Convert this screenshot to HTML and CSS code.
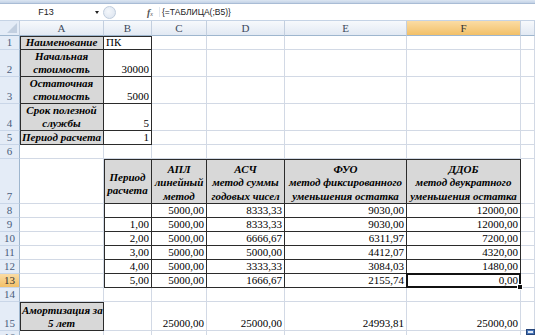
FILE: index.html
```html
<!DOCTYPE html>
<html lang="ru">
<head>
  <meta charset="UTF-8" />
  <title>Амортизация</title>
  <link rel="stylesheet" href="styles.css">
</head>
<body>
  <div class="app">
    <div class="ribbon-edge"></div>

    <div class="formula-bar">
      <div class="name-box">F13</div>
      <span class="drop"></span>
      <span class="knob"></span>
      <span class="fx"><i>f</i><small>x</small></span>
      <span class="formula">{=ТАБЛИЦА(;B5)}</span>
    </div>

    <table class="sheet">
      <colgroup>
        <col class="c-rh"><col class="c-a"><col class="c-b"><col class="c-c"><col class="c-d"><col class="c-e"><col class="c-f"><col class="c-g">
      </colgroup>
      <tr class="hdr">
        <th class="corner"></th><th>A</th><th>B</th><th>C</th><th>D</th><th>E</th><th class="sel">F</th><th></th>
      </tr>
      <tr class="h14">
        <th>1</th><td class="lbl bx bl bt">Наименование</td><td class="txt bx bt">ПК</td><td></td><td></td><td></td><td></td><td></td>
      </tr>
      <tr class="h27">
        <th>2</th><td class="lbl bx bl">Начальная<br>стоимость</td><td class="bx">30000</td><td></td><td></td><td></td><td></td><td></td>
      </tr>
      <tr class="h27">
        <th>3</th><td class="lbl bx bl">Остаточная<br>стоимость</td><td class="bx">5000</td><td></td><td></td><td></td><td></td><td></td>
      </tr>
      <tr class="h27">
        <th>4</th><td class="lbl bx bl">Срок полезной<br>службы</td><td class="bx">5</td><td></td><td></td><td></td><td></td><td></td>
      </tr>
      <tr class="h14">
        <th>5</th><td class="lbl bx bl">Период расчета</td><td class="bx">1</td><td></td><td></td><td></td><td></td><td></td>
      </tr>
      <tr class="h14">
        <th>6</th><td></td><td></td><td></td><td></td><td></td><td></td><td></td>
      </tr>
      <tr class="h45">
        <th>7</th><td></td>
        <td class="lbl head mid bx bl bt">Период<br>расчета</td>
        <td class="lbl head bx bt">АПЛ<br>линейный<br>метод</td>
        <td class="lbl head bx bt">АСЧ<br>метод суммы<br>годовых чисел</td>
        <td class="lbl head bx bt">ФУО<br>метод фиксированного<br>уменьшения остатка</td>
        <td class="lbl head bx bt">ДДОБ<br>метод двукратного<br>уменьшения остатка</td>
        <td></td>
      </tr>
      <tr class="h13">
        <th>8</th><td></td><td class="bx bl"></td><td class="bx">5000,00</td><td class="bx">8333,33</td><td class="bx">9030,00</td><td class="bx">12000,00</td><td></td>
      </tr>
      <tr class="h14">
        <th>9</th><td></td><td class="bx bl">1,00</td><td class="bx">5000,00</td><td class="bx">8333,33</td><td class="bx">9030,00</td><td class="bx">12000,00</td><td></td>
      </tr>
      <tr class="h13">
        <th>10</th><td></td><td class="bx bl">2,00</td><td class="bx">5000,00</td><td class="bx">6666,67</td><td class="bx">6311,97</td><td class="bx">7200,00</td><td></td>
      </tr>
      <tr class="h14">
        <th>11</th><td></td><td class="bx bl">3,00</td><td class="bx">5000,00</td><td class="bx">5000,00</td><td class="bx">4412,07</td><td class="bx">4320,00</td><td></td>
      </tr>
      <tr class="h13">
        <th>12</th><td></td><td class="bx bl">4,00</td><td class="bx">5000,00</td><td class="bx">3333,33</td><td class="bx">3084,03</td><td class="bx">1480,00</td><td></td>
      </tr>
      <tr class="h14">
        <th class="sel">13</th><td></td><td class="bx bl">5,00</td><td class="bx">5000,00</td><td class="bx">1666,67</td><td class="bx">2155,74</td><td class="bx cur">0,00</td><td></td>
      </tr>
      <tr class="h13">
        <th>14</th><td></td><td></td><td></td><td></td><td></td><td></td><td></td>
      </tr>
      <tr class="h29">
        <th>15</th><td class="lbl bx bl bt">Амортизация за<br>5 лет</td><td></td><td>25000,00</td><td>25000,00</td><td>24993,81</td><td>25000,00</td><td></td>
      </tr>
      <tr class="h14">
        <th>16</th><td></td><td></td><td></td><td></td><td></td><td></td><td></td>
      </tr>
    </table>

    <svg class="fill-opt" width="9" height="6" viewBox="0 0 9 6">
      <rect x="0.5" y="0.5" width="8" height="5" fill="#4a76b8" stroke="#27467a"/>
      <rect x="2" y="2" width="5" height="2" fill="#dfe9f7"/>
    </svg>
  </div>
</body>
</html>
```

FILE: styles.css
```css
html, body {
  margin: 0;
  padding: 0;
  background: #fff;
}

.app {
  position: relative;
  width: 535px;
  height: 335px;
  overflow: hidden;
  font-family: "Liberation Serif", serif;
}

.ribbon-edge {
  height: 3px;
  background: linear-gradient(#dce6f2, #c3d2e6);
  border-bottom: 1px solid #a9bcd5;
}

.formula-bar {
  display: flex;
  align-items: center;
  height: 16px;
  background: #fff;
  border-bottom: 1px solid #c5d3e5;
  font-family: "Liberation Sans", sans-serif;
  color: #222;
}

.name-box {
  width: 92px;
  text-align: center;
  font-size: 9px;
}

.drop {
  width: 0;
  height: 0;
  margin-left: 3px;
  border-top: 3px solid #222;
  border-left: 2.5px solid transparent;
  border-right: 2.5px solid transparent;
}

.knob {
  width: 13px;
  height: 13px;
  margin-left: 4px;
  border-radius: 50%;
  border: 1px solid #c0cddd;
  background: radial-gradient(circle at 40% 40%, #f4f7fb, #d9e2ee);
  box-sizing: border-box;
}

.fx {
  margin-left: 31px;
  font-family: "Liberation Serif", serif;
  font-size: 10px;
  color: #555;
}

.fx i {
  font-weight: bold;
}

.fx small {
  font-size: 6px;
  font-style: italic;
}

.formula {
  margin-left: 6px;
  padding-left: 2px;
  font-size: 8.5px;
  border-left: 1px solid #e2e8f0;
}

.sheet {
  table-layout: fixed;
  width: 535px;
  border-collapse: separate;
  border-spacing: 0;
  font-size: 11px;
  line-height: 13px;
}

.c-rh { width: 20px; }
.c-a { width: 84px; }
.c-b { width: 48px; }
.c-c { width: 55px; }
.c-d { width: 78px; }
.c-e { width: 122px; }
.c-f { width: 114px; }
.c-g { width: 14px; }

.sheet th,
.sheet td {
  box-sizing: border-box;
  padding: 0 2px;
  white-space: nowrap;
}

.sheet td {
  border-right: 1px solid #d2d9e5;
  border-bottom: 1px solid #d2d9e5;
  vertical-align: bottom;
  text-align: right;
  color: #000;
}

.sheet th {
  font-weight: normal;
  color: #34496a;
}

.hdr th {
  height: 15px;
  padding: 0;
  vertical-align: middle;
  text-align: center;
  background: linear-gradient(#f7f9fc, #e2e9f3);
  border-right: 1px solid #c3cfdf;
  border-bottom: 1px solid #9eb6ce;
  color: #3d4a5c;
}

tr:not(.hdr) th {
  padding: 0;
  vertical-align: bottom;
  text-align: center;
  background: #e4ecf7;
  border-right: 1px solid #9eb6ce;
  border-bottom: 1px solid #c9d6e8;
  color: #4a5d7c;
}

.sheet th.sel {
  background: linear-gradient(#fbdca4, #f2c068);
  color: #333;
}

.sheet th.corner {
  position: relative;
  background: #e4ecf7;
}

.corner::after {
  content: "";
  position: absolute;
  right: 2px;
  bottom: 2px;
  border-left: 10px solid transparent;
  border-bottom: 10px solid #c2cfe0;
}

.h13 > * { height: 13px; }
.h14 > * { height: 14px; }
.h27 > * { height: 27px; }
.h29 > * { height: 29px; }
.h45 > * { height: 45px; }

/* filled, boxed labels */
.lbl {
  background: #d8d8d8;
  font-weight: bold;
  font-style: italic;
}

.sheet td.lbl {
  text-align: center;
}

.sheet td.txt {
  text-align: left;
}

.head {
  line-height: 13.5px;
  padding-bottom: 1px;
}

.sheet td.mid {
  vertical-align: middle;
  padding-top: 6px;
}

.sheet td.bx {
  border-right-color: #2b2b2b;
  border-bottom-color: #2b2b2b;
}

.bl { box-shadow: inset 1px 0 #2b2b2b; }
.bt { box-shadow: inset 0 1px #2b2b2b; }
.bl.bt { box-shadow: inset 1px 1px #2b2b2b; }

/* active cell */
.cur {
  position: relative;
}

.cur::before {
  content: "";
  position: absolute;
  left: -1px;
  top: -1px;
  right: -1px;
  bottom: -1px;
  border: 2px solid #111;
}

.cur::after {
  content: "";
  position: absolute;
  right: -3px;
  bottom: -3px;
  width: 4px;
  height: 4px;
  background: #111;
  border: 1px solid #fff;
}

.fill-opt {
  position: absolute;
  right: 0;
  bottom: 0;
}
```
